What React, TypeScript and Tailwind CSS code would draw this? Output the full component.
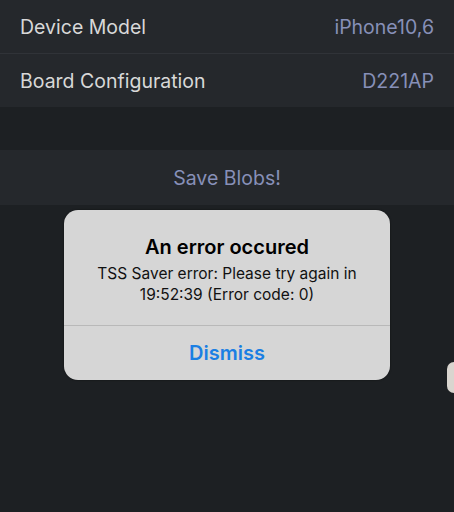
import React from "react";

export default function App() {
  return (
    <div
      className="relative w-[454px] h-[512px] overflow-hidden bg-[#1d2023]"
      style={{ fontFamily: "Inter, 'Noto Sans', sans-serif" }}
    >
      <div className="bg-[#25282c]">
        <div className="h-[53px] flex items-center justify-between pl-5 pr-5 pt-[3px] text-[19.5px]">
          <span className="text-[#d8d8d8]">Device Model</span>
          <span className="text-[#8790b8]">iPhone10,6</span>
        </div>
        <div className="h-px bg-[#303338]" />
        <div className="h-[53px] flex items-center justify-between pl-5 pr-5 pt-[3px] text-[19.5px]">
          <span className="text-[#d8d8d8]">Board Configuration</span>
          <span className="text-[#8790b8]">D221AP</span>
        </div>
      </div>
      <div className="h-[43px] bg-[#1d2023]" />
      <div className="h-[55px] bg-[#25282c] flex items-center justify-center pt-[2px] text-[19.5px] text-[#8790b8]">
        Save Blobs!
      </div>

      <div className="absolute left-[64px] top-[210px] w-[326px] h-[170px] rounded-[14px] bg-[#d6d6d6] flex flex-col shadow-[0_0_2px_rgba(0,0,0,0.6)]">
        <div className="h-[115px] flex flex-col items-center pt-[24px] text-black">
          <div className="text-[20px] font-semibold leading-[26px]">An error occured</div>
          <div className="text-[15.5px] leading-[21px] text-center mt-[3px] text-[#111]">
            TSS Saver error: Please try again in
            <br />
            19:52:39 (Error code: 0)
          </div>
        </div>
        <div className="h-px bg-[#b9b9b9]" />
        <div className="flex-1 flex items-center justify-center text-[20px] font-semibold text-[#1b7fe3]">
          Dismiss
        </div>
      </div>

      <div className="absolute left-[447px] top-[362px] w-[20px] h-[31px] rounded-[7px] bg-[#d9d5cf]" />
    </div>
  );
}
